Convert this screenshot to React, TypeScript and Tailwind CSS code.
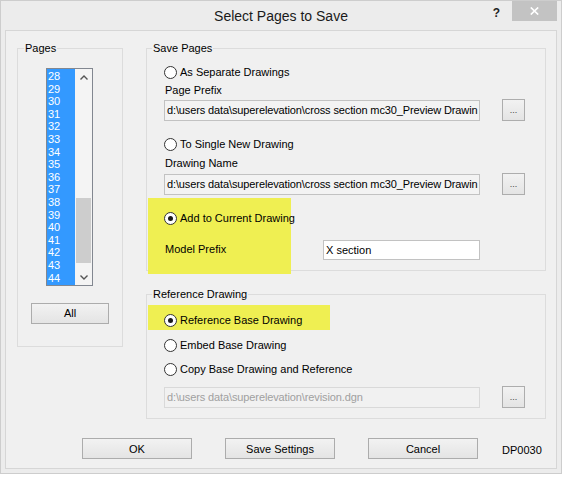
import React from "react";

const font = { fontFamily: '"Liberation Sans", Arial, sans-serif' };

function Radio({ checked, label }: { checked?: boolean; label: string }) {
  return (
    <div className="flex h-[16px] items-center whitespace-nowrap">
      <span className="flex h-[13px] w-[13px] shrink-0 items-center justify-center rounded-full border border-[#333333] bg-white">
        {checked && <span className="h-[5px] w-[5px] rounded-full bg-[#1a1a1a]" />}
      </span>
      <span className="ml-[3px] leading-[14px]">{label}</span>
    </div>
  );
}

function DotsButton() {
  return (
    <div className="flex h-[22px] w-[23px] items-end justify-center border border-[#adadad] bg-linear-to-b from-[#f2f2f2] to-[#e4e4e4] pb-[5px] text-[9px] leading-[9px] text-[#444]">
      ...
    </div>
  );
}

function PathRow({ text, disabled }: { text: string; disabled?: boolean }) {
  return (
    <div className="flex h-[22px] items-center">
      <div
        className={
          "flex h-[21px] w-[316px] items-center overflow-hidden whitespace-nowrap border pl-[2px] tracking-[-0.12px] " +
          (disabled
            ? "border-[#d9d9d9] bg-[#f1f1f1] text-[#a0a0a0]"
            : "border-[#c2c2c2] bg-[#f3f3f3] text-black")
        }
      >
        {text}
      </div>
      <div className="ml-[22px]">
        <DotsButton />
      </div>
    </div>
  );
}

function GroupLabel({ children, ml }: { children: React.ReactNode; ml: string }) {
  return (
    <div className={"-mt-[8px] h-[14px] w-fit bg-[#f0f0f0] px-[1px] leading-[14px] " + ml}>
      {children}
    </div>
  );
}

function Btn({ children }: { children: React.ReactNode }) {
  return (
    <div className="flex h-[21px] w-[110px] items-center justify-center border border-[#acacac] bg-linear-to-b from-[#f2f2f2] to-[#e4e4e4] leading-[14px]">
      {children}
    </div>
  );
}

export default function App() {
  const pages = Array.from({ length: 17 }, (_, i) => 28 + i);
  const path = "d:\\users data\\superelevation\\cross section mc30_Preview Drawin";
  return (
    <div className="h-[484px] w-[567px] bg-white text-[11px] text-black" style={font}>
      <div className="flex h-[474px] w-[562px] flex-col border border-[#cdcdcd] bg-[#ececec]">
        {/* title bar */}
        <div className="flex h-[29px] items-start">
          <div className="w-[90px]" />
          <div className="flex-1 pt-[7px] text-center text-[14px] leading-[17px] text-[#1a1a1a]">
            Select Pages to Save
          </div>
          <div className="flex w-[90px] items-start justify-end pr-[4px]">
            <span className="mr-[12px] mt-[5px] text-[12px] font-bold leading-[14px] text-[#222]">?</span>
            <div className="flex h-[20px] w-[45px] items-center justify-center bg-[#c3c3c3]">
              <svg width="9" height="8" viewBox="0 0 9 8">
                <path d="M0.8 0.5 L8.2 7.5 M8.2 0.5 L0.8 7.5" stroke="white" strokeWidth="1.7" fill="none" />
              </svg>
            </div>
          </div>
        </div>
        {/* client */}
        <div className="ml-[4px] h-[439px] w-[552px] border border-[#d6d6d6] bg-[#f0f0f0]">
          <div className="flex pl-[11px] pt-[17px]">
            {/* Pages group */}
            <div className="h-[299px] w-[106px] shrink-0 border border-[#dcdcdc]">
              <GroupLabel ml="ml-[6px]">Pages</GroupLabel>
              <div className="ml-[28px] mt-[13px] flex h-[218px] w-[47px] border border-[#828790] bg-white">
                <div className="w-[28px] overflow-hidden bg-[#3399ff] pl-[1px] pt-[1px] text-white">
                  {pages.map((p) => (
                    <div key={p} className="h-[12.6px] leading-[12.6px]">
                      {p}
                    </div>
                  ))}
                </div>
                <div className="flex w-[17px] flex-col bg-[#f4f4f4]">
                  <div className="flex h-[17px] items-center justify-center">
                    <svg width="8" height="5" viewBox="0 0 8 5">
                      <path d="M0.5 4.5 L4 1 L7.5 4.5" stroke="#555" strokeWidth="1.4" fill="none" />
                    </svg>
                  </div>
                  <div className="flex-1">
                    <div className="mx-[1px] mt-[112px] h-[65px] bg-[#cdcdcd]" />
                  </div>
                  <div className="flex h-[17px] items-center justify-center pt-[2px]">
                    <svg width="8" height="5" viewBox="0 0 8 5">
                      <path d="M0.5 0.5 L4 4 L7.5 0.5" stroke="#555" strokeWidth="1.4" fill="none" />
                    </svg>
                  </div>
                </div>
              </div>
              <div className="ml-[13px] mt-[17px] flex h-[21px] w-[78px] items-center justify-center border border-[#acacac] bg-linear-to-b from-[#f2f2f2] to-[#e4e4e4]">
                All
              </div>
            </div>

            {/* right column */}
            <div className="ml-[23px] flex w-[400px] shrink-0 flex-col">
              {/* Save Pages */}
              <div className="h-[223px] border border-[#dcdcdc]">
                <GroupLabel ml="ml-[5px]">Save Pages</GroupLabel>
                <div className="ml-[17px] mt-[9px]">
                  <Radio label="As Separate Drawings" />
                </div>
                <div className="ml-[18px] mt-[3px] leading-[14px]">Page Prefix</div>
                <div className="ml-[17px] mt-[2px]">
                  <PathRow text={path} />
                </div>
                <div className="ml-[17px] mt-[15px]">
                  <Radio label="To Single New Drawing" />
                </div>
                <div className="ml-[18px] mt-[4px] leading-[14px]">Drawing Name</div>
                <div className="ml-[17px] mt-[3px]">
                  <PathRow text={path} />
                </div>
                <div className="ml-[1px] mt-[3px] h-[76px] w-[143px] bg-[#efef52] pt-[12px]">
                  <div className="ml-[16px]">
                    <Radio checked label="Add to Current Drawing" />
                  </div>
                  <div className="mt-[14px] flex h-[20px] w-[332px] items-center">
                    <div className="w-[175px] shrink-0 whitespace-nowrap pl-[17px] pb-[3px] leading-[14px]">Model Prefix</div>
                    <div className="flex h-[20px] w-[157px] shrink-0 items-center border border-[#c2c2c2] bg-white pl-[2px]">
                      X section
                    </div>
                  </div>
                </div>
              </div>

              {/* Reference Drawing */}
              <div className="mt-[23px] h-[125px] border border-[#dcdcdc]">
                <GroupLabel ml="ml-[5px]">Reference Drawing</GroupLabel>
                <div className="ml-[1px] mt-[4px] h-[25px] w-[182px] bg-[#efef52] pt-[7px]">
                  <div className="ml-[16px]">
                    <Radio checked label="Reference Base Drawing" />
                  </div>
                </div>
                <div className="ml-[17px] mt-[7px]">
                  <Radio label="Embed Base Drawing" />
                </div>
                <div className="ml-[17px] mt-[8px]">
                  <Radio label="Copy Base Drawing and Reference" />
                </div>
                <div className="ml-[17px] mt-[9px]">
                  <PathRow disabled text="d:\users data\superelevation\revision.dgn" />
                </div>
              </div>
            </div>
          </div>

          {/* bottom buttons */}
          <div className="ml-[76px] mt-[19px] flex items-center">
            <Btn>OK</Btn>
            <div className="ml-[33px]">
              <Btn>Save Settings</Btn>
            </div>
            <div className="ml-[33px]">
              <Btn>Cancel</Btn>
            </div>
            <div className="ml-[24px] pt-[3px] leading-[14px]">DP0030</div>
          </div>
        </div>
      </div>
    </div>
  );
}
